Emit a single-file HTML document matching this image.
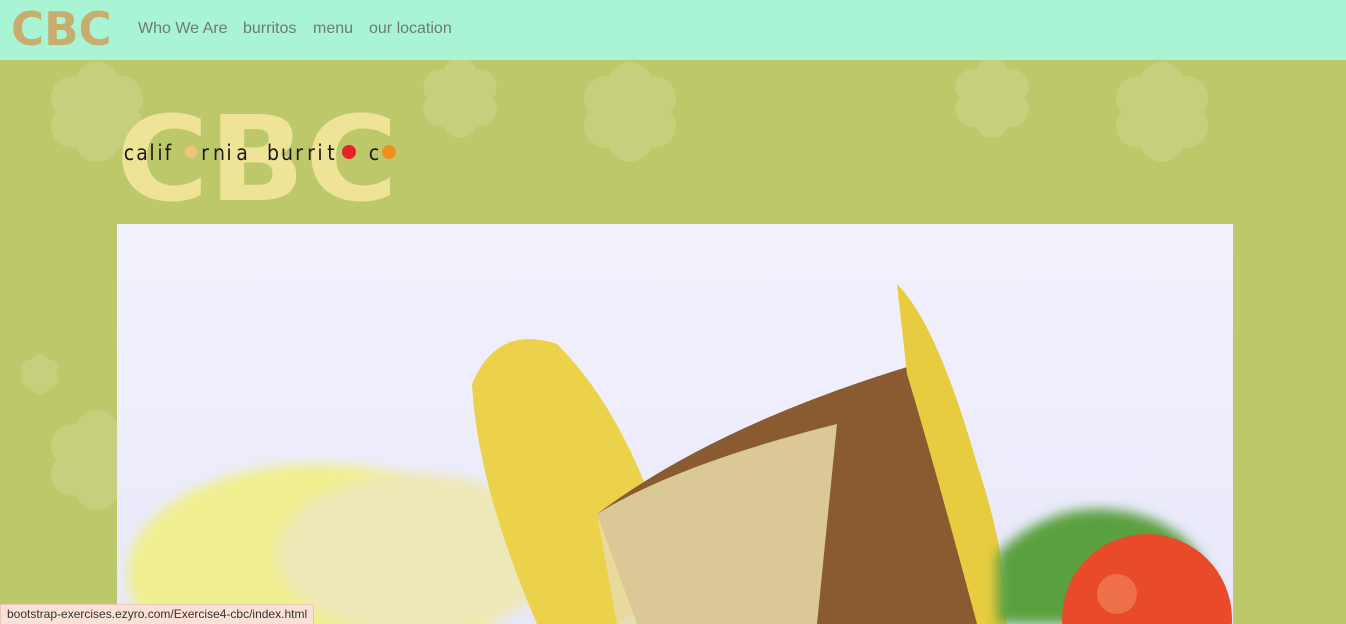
<!DOCTYPE html>
<html><head><style>
html,body{margin:0;width:1346px;height:624px;overflow:hidden}
body{background:#bdc86b;font-family:"Liberation Sans",sans-serif;position:relative}
.nav{position:absolute;left:0;top:0;width:1346px;height:60px;background:#a8f4d4}
.brand{position:absolute;left:11px;top:6px;font-size:46px;line-height:46px;font-weight:bold;color:#c8ae6e;font-family:"DejaVu Sans","Liberation Sans",sans-serif;transform:scaleX(0.98);transform-origin:left}
.nav a{position:absolute;top:20px;font-size:16px;color:#6d7a7a;text-decoration:none}
.status{position:absolute;left:0;top:604px;height:20px;box-sizing:border-box;padding:0 6px;background:#fbe0d6;border:1px solid #e8c8bc;border-bottom:none;font-size:12px;line-height:19px;color:#333}
</style></head><body>
<svg width="1346" height="624" style="position:absolute;left:0;top:0">
<defs><g id="fl"><circle cx="0" cy="-28" r="22"/><circle cx="24" cy="-14" r="22"/><circle cx="24" cy="14" r="22"/><circle cx="0" cy="28" r="22"/><circle cx="-24" cy="14" r="22"/><circle cx="-24" cy="-14" r="22"/><circle r="28"/></g></defs>
<g fill="#c6cf7c">
<use href="#fl" transform="translate(97,112)"/>
<use href="#fl" transform="translate(460,98) scale(0.8)"/>
<use href="#fl" transform="translate(630,112)"/>
<use href="#fl" transform="translate(992,98) scale(0.8)"/>
<use href="#fl" transform="translate(1162,112)"/>
<use href="#fl" transform="translate(40,374) scale(0.4)"/>
<use href="#fl" transform="translate(97,460)"/>
</g>
<text x="116" y="200" font-family="DejaVu Sans" font-weight="bold" font-size="118" fill="#eee396" textLength="282" lengthAdjust="spacingAndGlyphs">CBC</text>
<text y="160" font-family="DejaVu Sans Condensed,DejaVu Sans" font-size="21" fill="#1a1a1a" text-anchor="middle" x="129 142 152 160 168 205 219 229 242 273 287 299 311 320 331 374">califrniaburritc</text>
<circle cx="191" cy="152" r="6" fill="#f0c27a"/><circle cx="349" cy="152" r="7" fill="#e8202a"/><circle cx="389" cy="152" r="7" fill="#f09020"/>
</svg>
<div class="nav"><div class="brand">CBC</div>
<a style="left:138px">Who We Are</a><a style="left:243px">burritos</a><a style="left:313px">menu</a><a style="left:369px">our location</a></div>
<svg width="1116" height="400" style="position:absolute;left:117px;top:224px">
<defs><linearGradient id="bg" x1="0" y1="0" x2="0" y2="1"><stop offset="0" stop-color="#f2f2fc"/><stop offset="1" stop-color="#e8e8fb"/></linearGradient>
<filter id="b"><feGaussianBlur stdDeviation="6"/></filter></defs>
<rect width="1116" height="400" fill="url(#bg)"/>
<ellipse cx="200" cy="350" rx="190" ry="110" fill="#f0ef90" filter="url(#b)"/>
<ellipse cx="300" cy="330" rx="140" ry="80" fill="#eee8b8" filter="url(#b)"/>
<path d="M355 160 Q380 100 440 120 Q520 200 560 360 L500 400 L420 400 Q360 260 355 160Z" fill="#ecd24a"/>
<path d="M480 290 Q600 200 800 140 Q840 240 880 400 L520 400Z" fill="#8a5a30"/>
<path d="M480 290 Q560 240 720 200 L700 400 L500 400Z" fill="#e8dca8" opacity="0.85"/>
<path d="M780 60 Q820 100 860 240 Q890 330 890 400 L860 400 Q820 250 790 150Z" fill="#e8cc40"/>
<path d="M880 330 Q940 270 1020 290 Q1090 310 1100 380 L1100 400 L880 400Z" fill="#5aa040" filter="url(#b)"/>
<circle cx="1030" cy="395" r="85" fill="#e84a2a"/>
<circle cx="1000" cy="370" r="20" fill="#f08a60" opacity="0.6"/>
</svg>
<div class="status">bootstrap-exercises.ezyro.com/Exercise4-cbc/index.html</div>
</body></html>
